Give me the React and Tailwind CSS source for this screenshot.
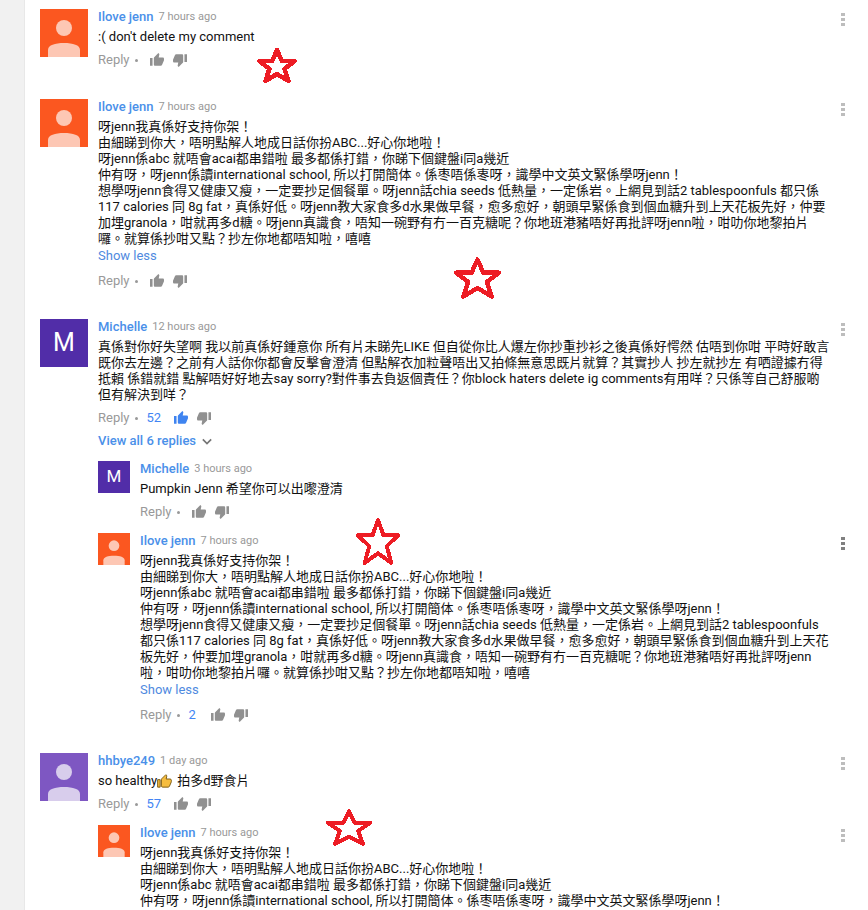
import React from 'react';

const longLines = [
  '呀jenn我真係好支持你架！',
  '由細睇到你大，唔明點解人地成日話你扮ABC...好心你地啦！',
  '呀jenn係abc 就唔會acai都串錯啦 最多都係打錯，你睇下個鍵盤i同a幾近',
  '仲有呀，呀jenn係讀international school, 所以打開簡体。係枣唔係栆呀，識學中文英文緊係學呀jenn！',
  '想學呀jenn食得又健康又瘦，一定要抄足個餐單。呀jenn話chia seeds 低熱量，一定係岩。上網見到話2 tablespoonfuls 都只係',
  '117 calories 同 8g fat，真係好低。呀jenn教大家食多d水果做早餐，愈多愈好，朝頭早緊係食到個血糖升到上天花板先好，仲要',
  '加埋granola，咁就再多d糖。呀jenn真識食，唔知一碗野有冇一百克糖呢？你地班港豬唔好再批評呀jenn啦，咁叻你地黎拍片',
  '囉。就算係抄咁又點？抄左你地都唔知啦，嘻嘻',
];

const replyLines = [
  '呀jenn我真係好支持你架！',
  '由細睇到你大，唔明點解人地成日話你扮ABC...好心你地啦！',
  '呀jenn係abc 就唔會acai都串錯啦 最多都係打錯，你睇下個鍵盤i同a幾近',
  '仲有呀，呀jenn係讀international school, 所以打開簡体。係枣唔係栆呀，識學中文英文緊係學呀jenn！',
  '想學呀jenn食得又健康又瘦，一定要抄足個餐單。呀jenn話chia seeds 低熱量，一定係岩。上網見到話2 tablespoonfuls',
  '都只係117 calories 同 8g fat，真係好低。呀jenn教大家食多d水果做早餐，愈多愈好，朝頭早緊係食到個血糖升到上天花',
  '板先好，仲要加埋granola，咁就再多d糖。呀jenn真識食，唔知一碗野有冇一百克糖呢？你地班港豬唔好再批評呀jenn',
  '啦，咁叻你地黎拍片囉。就算係抄咁又點？抄左你地都唔知啦，嘻嘻',
];

const michelleLines = [
  '真係對你好失望啊 我以前真係好鍾意你 所有片未睇先LIKE 但自從你比人爆左你抄重抄衫之後真係好愕然 估唔到你咁 平時好敢言',
  '既你去左邊？之前有人話你你都會反擊會澄清 但點解衣加粒聲唔出又拍條無意思既片就算？其實抄人 抄左就抄左 有哂證據冇得',
  '抵賴 係錯就錯 點解唔好好地去say sorry?對件事去負返個責任？你block haters delete ig comments有用咩？只係等自己舒服啲',
  '但有解決到咩？',
];

const ThumbUp = ({ className }) => (
  <svg viewBox="1 1 22 22" className={className} fill="currentColor">
    <path d="M1 21h4V9H1v12zm22-11c0-1.1-.9-2-2-2h-6.31l.95-4.57.03-.32c0-.41-.17-.79-.44-1.06L14.17 1 7.59 7.59C7.22 7.95 7 8.45 7 9v10c0 1.1.9 2 2 2h9c.83 0 1.54-.5 1.84-1.22l3.02-7.05c.09-.23.14-.47.14-.73v-1.91l-.01-.01L23 10z" />
  </svg>
);

const ThumbDown = ({ className }) => (
  <svg viewBox="1 1 22 22" className={className} fill="currentColor">
    <path d="M15 3H6c-.83 0-1.54.5-1.84 1.22l-3.02 7.05c-.09.23-.14.47-.14.73v1.91l.01.01L1 14c0 1.1.9 2 2 2h6.31l-.95 4.57-.03.32c0 .41.17.79.44 1.06L9.83 23l6.59-6.59c.36-.36.58-.86.58-1.41V5c0-1.1-.9-2-2-2zm4 0v12h4V3h-4z" />
  </svg>
);

// default google-style person avatar
const PersonAvatar = ({ bg, fg, className }) => (
  <svg viewBox="0 0 48 48" className={className}>
    <rect width="48" height="48" fill={bg} />
    <circle cx="24" cy="19" r="8" fill={fg} />
    <path d="M8 48V41C8 36 15 34 24 34S40 36 40 41V48Z" fill={fg} />
  </svg>
);

const LetterAvatar = ({ size, text }) => (
  <div className={`${size} shrink-0 bg-[#512da8] text-white flex items-center justify-center`}>{text}</div>
);

const Actions = ({ count, liked }) => {
  let thumbGap = 'ml-[12px]';
  if (count) thumbGap = count.length > 1 ? 'ml-[13px]' : 'ml-[15px]';

  return (
    <div className="h-6 mt-[3px] flex items-center text-[13px] text-[#999999]">
      <span>Reply</span>
      <span className="w-[3px] h-[3px] rounded-full bg-[#999999] ml-[5px]" />
      {count ? <span className="ml-[9px] text-[#4285f4]">{count}</span> : null}
      <ThumbUp className={`w-[14px] h-[14px] ${thumbGap} ${liked ? 'text-[#3f84f0]' : 'text-[#909090]'}`} />
      <ThumbDown className="w-[14px] h-[14px] ml-[9px] text-[#909090]" />
    </div>
  );
};

const Comment = ({ avatar, name, time, children, showLess, count, liked, menu, hideActions, className }) => (
  <div className={`flex ${className || ''}`}>
    {avatar}
    <div className="flex-1 min-w-0 ml-[10px]">
      <div className="h-4 flex items-center text-[13px] leading-4">
        <span className="font-medium text-[#4a90e9]">{name}</span>
        <span className="ml-[5px] text-[11px] text-[#999999]">{time}</span>
      </div>
      <div className="mt-1 text-[13px] leading-4 text-[#111111] whitespace-pre">{children}</div>
      {showLess ? <div className="mt-[1px] mb-[5px] text-[13px] leading-4 text-[#4f8ae0]">Show less</div> : null}
      {hideActions ? null : <Actions count={count} liked={liked} />}
    </div>
    {menu ? (
      <div className={`w-[4px] mt-1 mr-[23px] flex flex-col gap-[2px] ${menu === 'dark' ? 'text-[#808080]' : 'text-[#bdbdbd]'}`}>
        <span className="w-[4px] h-[3px] bg-current" />
        <span className="w-[4px] h-[3px] bg-current" />
        <span className="w-[4px] h-[3px] bg-current" />
      </div>
    ) : null}
  </div>
);

const Lines = ({ lines }) => lines.map((line) => <div key={line}>{line}</div>);

const Star = ({ className, width }) => (
  <svg viewBox="0 0 100 100" preserveAspectRatio="none" className={`absolute ${className}`} shapeRendering="crispEdges">
    <polygon
      points="50,8 62,38 94,38 69,59 79,92 50,73 21,92 31,59 6,38 38,38"
      fill="none"
      stroke="#ed1c24"
      strokeWidth={width}
      strokeLinejoin="round"
      vectorEffect="non-scaling-stroke"
    />
  </svg>
);

const orange = { bg: '#fb5720', fg: '#fdc7b4' };
const purple = { bg: '#7e57c2', fg: '#d8cdec' };

export default function App() {
  return (
    <div
      lang="zh-Hant"
      className="relative w-[868px] h-[910px] overflow-hidden flex bg-white"
      style={{ fontFamily: 'Roboto, "Noto Sans CJK TC", sans-serif' }}
    >
      <aside className="w-[25px] shrink-0 bg-[#f1f1f1] border-r border-[#e8e8e8]" />
      <main className="flex-1 min-w-0 pl-[15px] pt-[9px]">
        <Comment
          avatar={<PersonAvatar {...orange} className="w-12 h-12 shrink-0" />}
          name="Ilove jenn"
          time="7 hours ago"
          menu="light"
        >
          :( don't delete my comment
        </Comment>

        <Comment
          className="mt-[27px]"
          avatar={<PersonAvatar {...orange} className="w-12 h-12 shrink-0" />}
          name="Ilove jenn"
          time="7 hours ago"
          menu="light"
          showLess
        >
          <Lines lines={longLines} />
        </Comment>

        <Comment
          className="mt-[26px]"
          avatar={<LetterAvatar size="w-12 h-12 text-[25px]" text="M" />}
          name="Michelle"
          time="12 hours ago"
          menu="light"
          count="52"
          liked
        >
          <Lines lines={michelleLines} />
        </Comment>

        <div className="ml-[58px] mt-[3px] h-4 flex items-center text-[13px] font-medium text-[#4a90e9]">
          View all 6 replies
          <svg viewBox="0 0 12 8" className="w-[10px] h-[7px] ml-[6px] text-[#757575]" fill="none" stroke="currentColor" strokeWidth="2">
            <path d="M1 1.5L6 6.5L11 1.5" />
          </svg>
        </div>

        <div className="ml-[58px] mt-3">
          <Comment
            avatar={<LetterAvatar size="w-8 h-8 text-[17px]" text="M" />}
            name="Michelle"
            time="3 hours ago"
          >
            Pumpkin Jenn 希望你可以出嚟澄清
          </Comment>

          <Comment
            className="mt-[9px]"
            avatar={<PersonAvatar {...orange} className="w-8 h-8 shrink-0" />}
            name="Ilove jenn"
            time="7 hours ago"
            menu="dark"
            showLess
            count="2"
          >
            <Lines lines={replyLines} />
          </Comment>
        </div>

        <Comment
          className="mt-[26px]"
          avatar={<PersonAvatar {...purple} className="w-12 h-12 shrink-0" />}
          name="hhbye249"
          time="1 day ago"
          menu="light"
          count="57"
        >
          <div className="flex items-center">
            so healthy
            <svg viewBox="0 0 24 24" className="w-[15px] h-[15px]" fill="#f6bd3f" stroke="#7a5a12" strokeWidth="1.5">
              <path d="M1 21h4V9H1v12zm22-11c0-1.1-.9-2-2-2h-6.31l.95-4.57.03-.32c0-.41-.17-.79-.44-1.06L14.17 1 7.59 7.59C7.22 7.95 7 8.45 7 9v10c0 1.1.9 2 2 2h9c.83 0 1.54-.5 1.84-1.22l3.02-7.05c.09-.23.14-.47.14-.73v-1.91l-.01-.01L23 10z" />
            </svg>
            <span className="ml-[5px]">拍多d野食片</span>
          </div>
        </Comment>

        <div className="ml-[58px] mt-[9px]">
          <Comment
            avatar={<PersonAvatar {...orange} className="w-8 h-8 shrink-0" />}
            name="Ilove jenn"
            time="7 hours ago"
            menu="light"
            hideActions
          >
            {/* the rest of this comment is below the fold */}
            <Lines lines={replyLines.slice(0, 4)} />
          </Comment>
        </div>
      </main>

      {/* red stars drawn on top of the screenshot */}
      <Star className="left-[257px] top-[47px] w-[40px] h-[37px]" width={4.5} />
      <Star className="left-[453px] top-[256px] w-[49px] h-[44px]" width={4.5} />
      <Star className="left-[355px] top-[516px] w-[46px] h-[51px]" width={4} />
      <Star className="left-[325px] top-[808px] w-[48px] h-[39px]" width={4} />
    </div>
  );
}
